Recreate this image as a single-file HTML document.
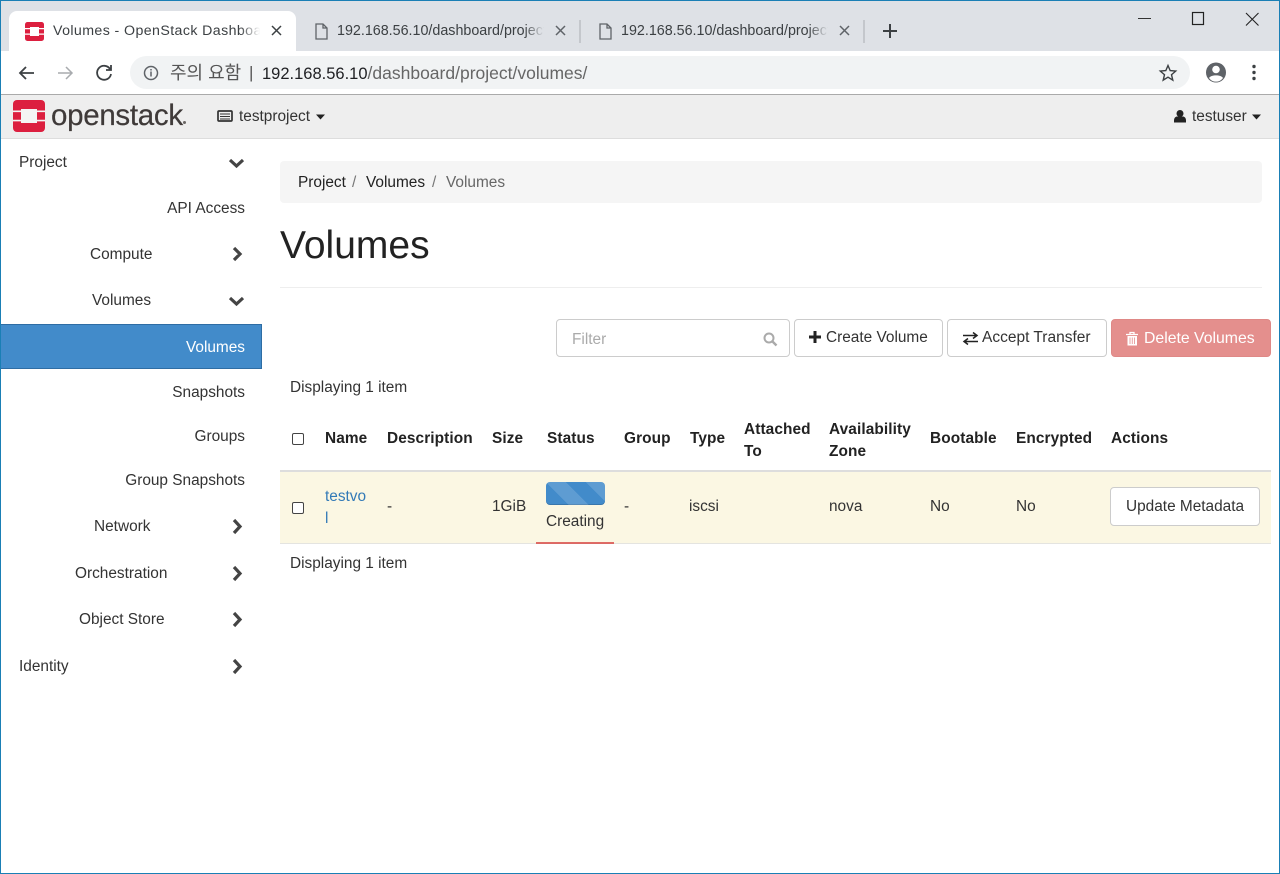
<!DOCTYPE html>
<html><head><meta charset="utf-8"><style>
html,body{margin:0;padding:0;background:#fff}
#p{position:relative;width:1280px;height:874px;overflow:hidden;background:#fff;font-family:"Liberation Sans","Noto Sans CJK KR",sans-serif;font-size:15.4px;color:#333}
.a{position:absolute;white-space:nowrap;line-height:20px;margin-top:1px}
.b{font-weight:bold;color:#222;letter-spacing:.1px}
.btn{position:absolute;box-sizing:border-box;background:#fff;border:1px solid #ccc;border-radius:4px;color:#333}
svg{position:absolute;overflow:visible}
</style></head><body><div id="p">
<div style="position:absolute;left:0;top:0;width:1280px;height:51px;background:#dee1e6"></div>
<div style="position:absolute;left:0;top:51px;width:1280px;height:44px;background:#fff"></div>
<div style="position:absolute;left:130px;top:56px;width:1060px;height:33px;background:#f1f3f4;border-radius:17px"></div>
<div style="position:absolute;left:0;top:94px;width:1280px;height:1px;background:#aaa"></div>
<div style="position:absolute;left:0;top:95px;width:1280px;height:43px;background:#eee;border-bottom:1px solid #ddd"></div>
<div style="position:absolute;left:9px;top:11px;width:287px;height:40px;background:#fff;border-radius:8px 8px 0 0"></div>
<svg style="left:0;top:0" width="1280" height="140">
<rect x="25" y="22" width="19" height="19" rx="2.500" fill="#dc1f3f"/><rect x="30" y="27" width="9" height="9" fill="#fff"/><path d="M25 28h5v1.200h-5zM39 28h5v1.200h-5zM25 33.500h5v1.200h-5zM39 33.500h5v1.200h-5z" fill="#fff"/>
<g fill="none" stroke="#5f6368" stroke-width="1.300"><path d="M316 24h7l4 4v11h-11zM323 24v4h4M600 24h7l4 4v11h-11zM607 24v4h4"/></g>
<g fill="none" stroke="#3c4043" stroke-width="1.500"><path d="M272 26l9 9M281 26l-9 9"/><path d="M556 26l9 9M565 26l-9 9M840 26l9 9M849 26l-9 9" stroke="#5f6368"/></g>
<path d="M580 20v23M864 20v23" stroke="#aaadb2" stroke-width="1"/>
<path d="M890 24v14M883 31h14" stroke="#3c4043" stroke-width="2"/>
<path d="M1138 18.500h13" stroke="#333" stroke-width="1"/>
<rect x="1192.500" y="12.500" width="11" height="12" fill="none" stroke="#222" stroke-width="1.200"/>
<path d="M1246 13l12.500 12.500M1258.500 13l-12.500 12.500" stroke="#222" stroke-width="1.100"/>
<path d="M34 73H20M26 67l-6 6 6 6" fill="none" stroke="#3c4043" stroke-width="1.800"/>
<path d="M58 73h14M66 67l6 6-6 6" fill="none" stroke="#a8abae" stroke-width="1.500"/>
<path d="M110 69a7 7 0 1 0 1 5M111 65v5h-5" fill="none" stroke="#3c4043" stroke-width="1.800"/>
<circle cx="151" cy="73" r="6.500" fill="none" stroke="#5f6368" stroke-width="1.500"/><path d="M151 71.500v5M151 69v1.500" stroke="#5f6368" stroke-width="1.500"/>
<path d="M1168 65.500l2.200 5.100 5.500.5-4.200 3.600 1.300 5.400-4.800-2.900-4.800 2.900 1.300-5.400-4.200-3.600 5.500-.5z" fill="none" stroke="#3c4043" stroke-width="1.400"/>
<circle cx="1216" cy="72.500" r="10" fill="#5f6368"/><circle cx="1216" cy="69.500" r="3.800" fill="#fff"/><path d="M1209 78c2-3.500 12-3.500 14 0a8.500 8.500 0 0 1-14 0z" fill="#fff"/>
<g fill="#3c4043"><circle cx="1254" cy="66.500" r="1.700"/><circle cx="1254" cy="72.500" r="1.700"/><circle cx="1254" cy="78.500" r="1.700"/></g>
<rect x="13" y="100" width="32" height="32" rx="4" fill="#dc1f3f"/><rect x="21" y="109" width="16" height="14" fill="#f4f4f4"/><path d="M13 110.500h8v1.600h-8zM37 110.500h8v1.600h-8zM13 119.800h8v1.600h-8zM37 119.800h8v1.600h-8z" fill="#f4f4f4"/>
<rect x="218" y="111" width="14" height="10" rx="1" fill="none" stroke="#333" stroke-width="1.700"/><path d="M220 114h10M220 116.500h10M220 119h10" stroke="#333"/>
<path d="M316 114.500h9l-4.500 5zM1252 114.500h9l-4.500 5z" fill="#222"/>
<circle cx="1180" cy="113.500" r="3.500" fill="#222"/><path d="M1174 122.500v-2c0-3 2-4 3-4h6c1 0 3 1 3 4v2z" fill="#222"/>
</svg>
<div class="a" style="left:53px;top:20px;font-size:14.200px;letter-spacing:.4px;color:#3c4043;width:207px;overflow:hidden">Volumes - OpenStack Dashboard</div>
<div class="a" style="left:337px;top:20px;font-size:14.300px;color:#3c4043;width:207px;overflow:hidden">192.168.56.10/dashboard/project/volumes/</div>
<div class="a" style="left:621px;top:20px;font-size:14.300px;color:#3c4043;width:207px;overflow:hidden">192.168.56.10/dashboard/project/volumes/</div>
<div style="position:absolute;left:240px;top:18px;width:20px;height:26px;background:linear-gradient(90deg,rgba(255,255,255,0),#fff)"></div>
<div style="position:absolute;left:524px;top:18px;width:20px;height:26px;background:linear-gradient(90deg,rgba(222,225,230,0),#dee1e6)"></div>
<div style="position:absolute;left:808px;top:18px;width:20px;height:26px;background:linear-gradient(90deg,rgba(222,225,230,0),#dee1e6)"></div>
<div class="a" style="left:170px;top:62px;font-size:18px;color:#555">주의 요함</div>
<div class="a" style="left:249px;top:62px;font-size:17px;color:#555">|</div>
<div class="a" style="left:262px;top:62px;font-size:17.500px;color:#666"><span style="color:#202124;font-size:16.500px">192.168.56.10</span>/dashboard/project/volumes/</div>
<div class="a" style="left:51px;top:98px;font-size:29.500px;line-height:34px;color:#3f3a39;letter-spacing:-.3px;-webkit-text-stroke:.2px #3f3a39">openstack</div>
<div style="position:absolute;left:183px;top:121px;width:3px;height:3px;border-radius:50%;background:#6a6664"></div>
<div class="a" style="left:239px;top:106px">testproject</div>
<div class="a" style="left:1192px;top:106px">testuser</div>

<div style="position:absolute;left:0;top:324px;width:262px;height:45px;box-sizing:border-box;background:#428bca;border:1px solid #2e6da4;border-left:0"></div>
<div class="a" style="left:19px;top:152px">Project</div>
<div class="a" style="right:1035px;top:198px">API Access</div>
<div class="a" style="left:90px;top:244px">Compute</div>
<div class="a" style="left:92px;top:290px">Volumes</div>
<div class="a" style="right:1035px;top:337px;color:#fff">Volumes</div>
<div class="a" style="right:1035px;top:382px">Snapshots</div>
<div class="a" style="right:1035px;top:426px">Groups</div>
<div class="a" style="right:1035px;top:470px">Group Snapshots</div>
<div class="a" style="left:94px;top:516px">Network</div>
<div class="a" style="left:75px;top:563px">Orchestration</div>
<div class="a" style="left:79px;top:609px">Object Store</div>
<div class="a" style="left:19px;top:656px">Identity</div>
<svg style="left:0;top:0" width="280" height="700"><g fill="none" stroke="#444" stroke-width="3.200">
<path d="M230 160l6.500 6 6.500-6M230 298l6.500 6 6.500-6"/>
<path d="M234 248l6 6-6 6M234 520l6 6.500-6 6.500M234 567l6 6.500-6 6.500M234 613l6 6.500-6 6.500M234 660l6 6.500-6 6.500"/></g></svg>

<div style="position:absolute;left:280px;top:161px;width:982px;height:42px;background:#f5f5f5;border-radius:4px"></div>
<div class="a" style="left:298px;top:172px;color:#222">Project</div>
<div class="a" style="left:352px;top:172px;color:#777">/</div>
<div class="a" style="left:366px;top:172px;color:#222">Volumes</div>
<div class="a" style="left:432px;top:172px;color:#777">/</div>
<div class="a" style="left:446px;top:172px;color:#666">Volumes</div>
<div class="a" style="left:280px;top:222px;font-size:39px;line-height:46px;color:#222">Volumes</div>
<div style="position:absolute;left:280px;top:287px;width:982px;height:1px;background:#eee"></div>

<div class="btn" style="left:556px;top:319px;width:234px;height:38px"></div>
<div class="a" style="left:572px;top:329px;color:#aaa">Filter</div>
<svg style="left:763px;top:332px" width="16" height="16"><circle cx="6" cy="6" r="4.500" fill="none" stroke="#aaa" stroke-width="2"/><path d="M9.500 9.500l4 4" stroke="#aaa" stroke-width="2.400"/></svg>
<div class="btn" style="left:794px;top:319px;width:149px;height:38px"></div>
<svg style="left:809px;top:331px" width="13" height="13"><path d="M6 0v12M0 6h12" stroke="#222" stroke-width="3"/></svg>
<div class="a" style="left:826px;top:327px">Create Volume</div>
<div class="btn" style="left:947px;top:319px;width:160px;height:38px"></div>
<svg style="left:963px;top:332px" width="16" height="13"><path d="M0 3.500h13M10 .5l4 3-4 3M15 9.500H2M5 6.500l-4 3 4 3" fill="none" stroke="#222" stroke-width="1.500"/></svg>
<div class="a" style="left:982px;top:327px;font-size:15.500px">Accept Transfer</div>
<div class="btn" style="left:1111px;top:319px;width:160px;height:38px;background:#e48f8d;border-color:#df8886"></div>
<svg style="left:1126px;top:332px" width="13" height="14"><path d="M0 2.500h12M4 2V.5h4V2" fill="none" stroke="#fff" stroke-width="1.300"/><path d="M1.500 4h9.500v9.500h-9.500z" fill="#fff"/><path d="M4 5.500v6.500M6.250 5.500v6.500M8.500 5.500v6.500" stroke="#e48f8d" stroke-width=".8"/></svg>
<div class="a" style="left:1144px;top:328px;color:#fff;font-size:15.800px">Delete Volumes</div>

<div class="a" style="left:290px;top:377px">Displaying 1 item</div>

<div style="position:absolute;left:280px;top:470px;width:991px;height:2px;background:#ddd"></div>
<div style="position:absolute;left:280px;top:472px;width:991px;height:71px;background:#fbf7e3"></div>
<div style="position:absolute;left:280px;top:543px;width:991px;height:1px;background:#e4e4e0"></div>
<div style="position:absolute;left:536px;top:542px;width:78px;height:2px;background:#d9534f;opacity:.85"></div>
<div style="position:absolute;left:292px;top:433px;width:12px;height:12px;box-sizing:border-box;border:1.500px solid #444;border-radius:2px;background:#fff"></div>
<div style="position:absolute;left:292px;top:502px;width:12px;height:12px;box-sizing:border-box;border:1.500px solid #444;border-radius:2px;background:#fff"></div>
<div class="a b" style="left:325px;top:428px">Name</div>
<div class="a b" style="left:387px;top:428px">Description</div>
<div class="a b" style="left:492px;top:428px">Size</div>
<div class="a b" style="left:547px;top:428px">Status</div>
<div class="a b" style="left:624px;top:428px">Group</div>
<div class="a b" style="left:690px;top:428px">Type</div>
<div class="a b" style="left:744px;top:418px;line-height:22px">Attached<br>To</div>
<div class="a b" style="left:829px;top:418px;line-height:22px">Availability<br>Zone</div>
<div class="a b" style="left:930px;top:428px">Bootable</div>
<div class="a b" style="left:1016px;top:428px">Encrypted</div>
<div class="a b" style="left:1111px;top:428px">Actions</div>
<div class="a" style="left:325px;top:485px;line-height:22px;color:#337ab7">testvo<br>l</div>
<div class="a" style="left:387px;top:496px">-</div>
<div class="a" style="left:492px;top:496px">1GiB</div>
<div style="position:absolute;left:546px;top:482px;width:59px;height:23px;border-radius:4px;background:#428bca;overflow:hidden;box-shadow:inset 0 -1px 0 rgba(0,0,0,.15)"><div style="width:100%;height:100%;background:linear-gradient(45deg,rgba(255,255,255,.15) 25%,transparent 25%,transparent 50%,rgba(255,255,255,.15) 50%,rgba(255,255,255,.15) 75%,transparent 75%);background-size:40px 40px"></div></div>
<div class="a" style="left:546px;top:511px">Creating</div>
<div class="a" style="left:624px;top:496px">-</div>
<div class="a" style="left:689px;top:496px">iscsi</div>
<div class="a" style="left:829px;top:496px">nova</div>
<div class="a" style="left:930px;top:496px">No</div>
<div class="a" style="left:1016px;top:496px">No</div>
<div class="btn" style="left:1110px;top:487px;width:150px;height:39px"></div>
<div class="a" style="left:1126px;top:496px">Update Metadata</div>
<div class="a" style="left:290px;top:553px">Displaying 1 item</div>
<div style="position:absolute;left:0;top:0;width:1280px;height:874px;box-sizing:border-box;border:1px solid #1a7fb5;pointer-events:none"></div>
</div></body></html>
